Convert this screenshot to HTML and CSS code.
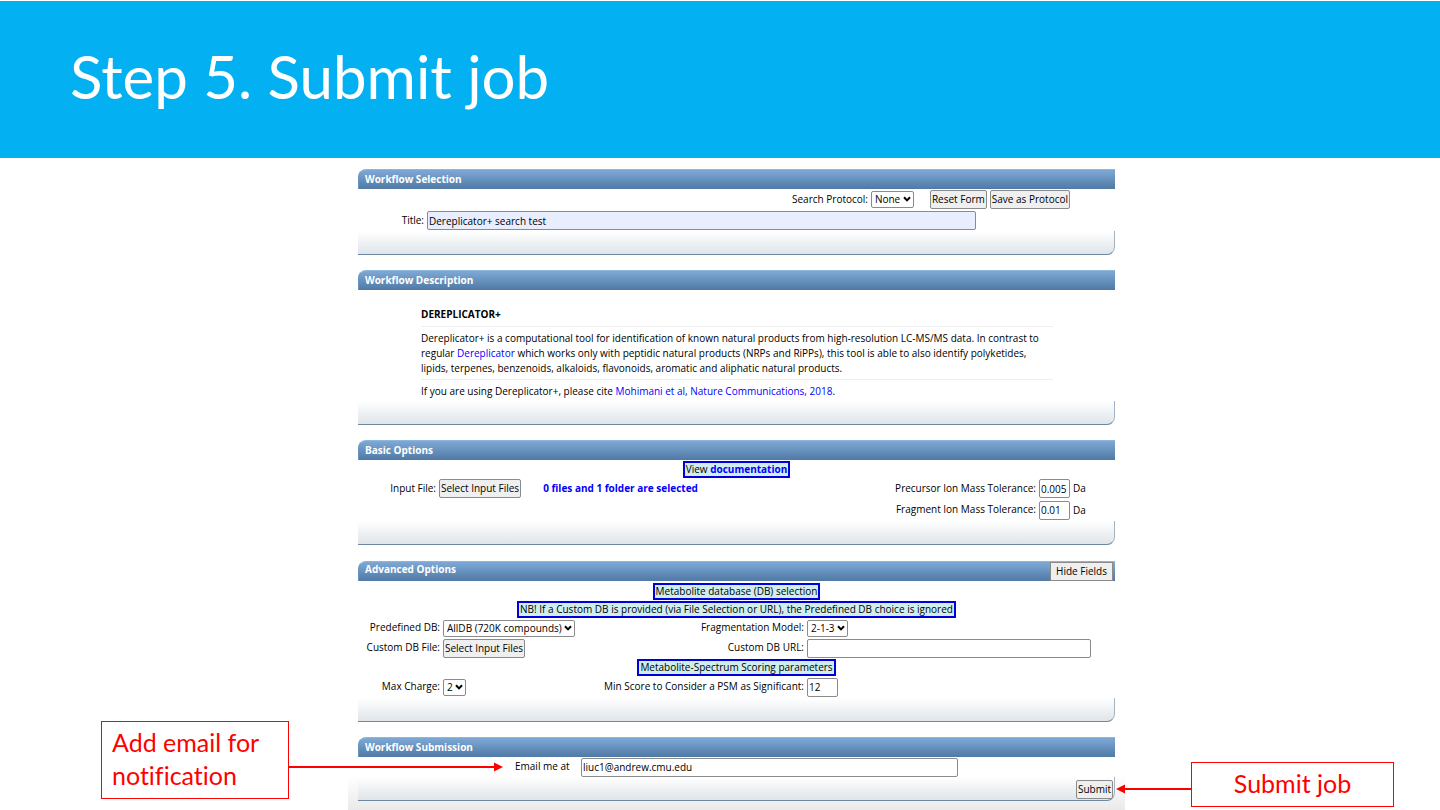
FILE: index.html
```html
<!DOCTYPE html>
<html lang="en">
<head>
<meta charset="utf-8">
<title>Step 5. Submit job</title>
<link rel="stylesheet" href="styles.css">
</head>
<body>
<header class="banner"><h1 class="banner-title">Step 5. Submit job</h1></header>
<main class="stage">
  <aside class="side side-left">
    <div class="callout callout-email">Add email for notification
      <svg class="arrow arrow-right" viewBox="0 0 215 10" aria-hidden="true"><path d="M0 5H207" stroke="#f00" stroke-width="2"/><path d="M206 0.5L215 5L206 9.5Z" fill="#f00"/></svg>
    </div>
  </aside>

  <form class="form" onsubmit="return false">
    <section class="panel">
      <div class="panel-head"><h2 class="panel-title">Workflow Selection</h2></div>
      <div class="row row-protocol">
        <label class="label" for="protocol">Search Protocol:</label>
        <span class="select-box"><select class="select" id="protocol"><option>None</option></select><svg class="chevron" viewBox="0 0 8 6" aria-hidden="true"><path d="M1 1.2L4 4.4L7 1.2"/></svg></span>
        <button class="button button-reset" type="button">Reset Form</button>
        <button class="button" type="button">Save as Protocol</button>
      </div>
      <div class="row row-title">
        <label class="label label-title" for="title">Title:</label>
        <input class="input input-fill input-tinted" id="title" type="text" value="Dereplicator+ search test">
      </div>
      <div class="panel-foot"></div>
    </section>

    <section class="panel">
      <div class="panel-head"><h2 class="panel-title">Workflow Description</h2></div>
      <div class="about">
        <h3 class="about-title">DEREPLICATOR+</h3>
        <p class="about-text">Dereplicator+ is a computational tool for identification of known natural products from high-resolution LC-MS/MS data. In contrast to regular <a class="link" href="#">Dereplicator</a> which works only with peptidic natural products (NRPs and RiPPs), this tool is able to also identify polyketides, lipids, terpenes, benzenoids, alkaloids, flavonoids, aromatic and aliphatic natural products.</p>
        <p class="about-cite">If you are using Dereplicator+, please cite <a class="link" href="#">Mohimani et al, Nature Communications, 2018</a>.</p>
      </div>
      <div class="panel-foot"></div>
    </section>

    <section class="panel">
      <div class="panel-head"><h2 class="panel-title">Basic Options</h2></div>
      <div class="notice-row"><span class="notice">View <a class="link link-strong" href="#">documentation</a></span></div>
      <div class="row basic">
        <span class="label label-file" id="input-file">Input File:</span>
        <button class="button" type="button" aria-describedby="input-file">Select Input Files</button>
        <strong class="status">0 files and 1 folder are selected</strong>
        <label class="label label-push" for="precursor">Precursor Ion Mass Tolerance:</label>
        <input class="input input-short" id="precursor" type="text" value="0.005">
        <span class="unit">Da</span>
      </div>
      <div class="row basic row-last">
        <label class="label label-push" for="fragment">Fragment Ion Mass Tolerance:</label>
        <input class="input input-short" id="fragment" type="text" value="0.01">
        <span class="unit">Da</span>
      </div>
      <div class="panel-foot"></div>
    </section>

    <section class="panel panel-advanced">
      <div class="panel-head head-advanced"><h2 class="panel-title">Advanced Options</h2><button class="button button-hide" type="button">Hide Fields</button></div>
      <div class="notice-row notice-first"><span class="notice">Metabolite database (DB) selection</span></div>
      <div class="notice-row"><span class="notice">NB! If a Custom DB is provided (via File Selection or URL), the Predefined DB choice is ignored</span></div>
      <div class="pairs">
        <label class="label" for="db">Predefined DB:</label>
        <span class="select-box"><select class="select" id="db"><option>AllDB (720K compounds)</option></select><svg class="chevron" viewBox="0 0 8 6" aria-hidden="true"><path d="M1 1.2L4 4.4L7 1.2"/></svg></span>
        <label class="label" for="model">Fragmentation Model:</label>
        <span class="select-box"><select class="select" id="model"><option>2-1-3</option></select><svg class="chevron" viewBox="0 0 8 6" aria-hidden="true"><path d="M1 1.2L4 4.4L7 1.2"/></svg></span>
      </div>
      <div class="pairs">
        <span class="label" id="custom-file">Custom DB File:</span>
        <button class="button" type="button" aria-describedby="custom-file">Select Input Files</button>
        <label class="label" for="url">Custom DB URL:</label>
        <input class="input input-wide" id="url" type="text">
      </div>
      <div class="notice-row"><span class="notice">Metabolite-Spectrum Scoring parameters</span></div>
      <div class="pairs pairs-last">
        <label class="label" for="charge">Max Charge:</label>
        <span class="select-box"><select class="select" id="charge"><option>2</option></select><svg class="chevron" viewBox="0 0 8 6" aria-hidden="true"><path d="M1 1.2L4 4.4L7 1.2"/></svg></span>
        <label class="label" for="score">Min Score to Consider a PSM as Significant:</label>
        <input class="input input-short" id="score" type="text" value="12">
      </div>
      <div class="panel-foot"></div>
    </section>

    <section class="panel">
      <div class="panel-head"><h2 class="panel-title">Workflow Submission</h2></div>
      <div class="row row-email">
        <label class="label label-email" for="email">Email me at</label>
        <input class="input input-fill" id="email" type="email" value="liuc1@andrew.cmu.edu">
      </div>
      <div class="panel-foot foot-submit"><button class="button" type="submit">Submit</button></div>
    </section>
  </form>

  <aside class="side side-right">
    <div class="callout callout-submit">Submit job
      <svg class="arrow arrow-left" viewBox="0 0 76 10" aria-hidden="true"><path d="M8 5H76" stroke="#f00" stroke-width="2"/><path d="M9 0.5L0 5L9 9.5Z" fill="#f00"/></svg>
    </div>
  </aside>
</main>
</body>
</html>
```
FILE: styles.css
```css
* { box-sizing: border-box; }

body {
  margin: 0;
  padding-top: 1px;
  background: #fff;
  color: #000;
  font-family: "Lato", "Liberation Sans", sans-serif;
  font-variant-ligatures: none;
}

.banner {
  display: flex;
  align-items: center;
  height: 157px;
  padding: 0 70px 8px;
  background: #03b0f2;
}

.banner-title {
  margin: 0;
  color: #fff;
  font-size: 60px;
  font-weight: 400;
  line-height: 72px;
}

.stage {
  display: grid;
  grid-template-columns: 348px minmax(0, 1fr) 315px;
}

.side { display: flex; align-items: flex-end; }
.side-left { padding: 0 59px 11px 101px; }
.side-right { padding: 0 46px 3px 66px; }

.callout {
  position: relative;
  flex: 1;
  border: 1px solid #f00;
  background: #fff;
  color: #f00;
  font-size: 25px;
}

.callout-email { padding: 4px 10px 6px; line-height: 33px; }
.callout-submit { padding: 4px 0 6px; line-height: 33px; text-align: center; }

/* Connectors run from a callout over the form */
.arrow { position: absolute; height: 10px; }
.arrow-right { left: 100%; top: 40px; width: 215px; z-index: 1; }
.arrow-left { right: 100%; top: 21px; width: 76px; z-index: 1; }

.form {
  display: flex;
  flex-direction: column;
  gap: 15px;
  padding: 11px 10px 9px;
  background: linear-gradient(to top, #eaeaea, #fff 34px);
  font-family: "Open Sans", sans-serif;
  font-size: 10px;
  font-weight: 500;
  line-height: 15px;
}

.panel {
  border-radius: 8px 0 8px 0;
  background: #fff;
}

.panel-advanced { margin-top: 1px; }

.panel-head {
  display: flex;
  align-items: center;
  height: 20px;
  padding: 0 0 1px 6px;
  border-top: 1px solid #8db6dc;
  border-left: 1px solid #6a94c0;
  border-radius: 8px 0 0 0;
  background: linear-gradient(#7ea9d6, #5079a5);
}

.panel-title {
  margin: 0;
  color: #fff;
  font-size: 10px;
  font-weight: 700;
  line-height: 15px;
}

.head-advanced { align-items: flex-start; justify-content: space-between; padding-right: 2px; }

.panel-foot {
  height: 24px;
  border-right: 1px solid #a3b3c1;
  border-bottom: 1px solid #6f88a0;
  border-radius: 0 0 8px 0;
  background: linear-gradient(#fff, #dfe5ea);
}

.row { display: flex; align-items: center; gap: 3px; min-height: 21px; }
.row-protocol { justify-content: flex-end; padding-right: 45px; }
.row-title { padding-right: 139px; }
.row-last { min-height: 22px; }
.label { padding-bottom: 1px; text-align: right; white-space: nowrap; }
.label-title { width: 66px; }

.input,
.button,
.select {
  margin: 0;
  border: 1px solid #8b8b8b;
  border-radius: 2px;
  color: #000;
  font: inherit;
}

.input { height: 19px; padding: 0 1px; background: #fff; }
.input-fill { flex: 1; min-width: 0; }
.input-tinted { background: #e8eefe; }
.input-short { width: 31px; }
.input-wide { width: 100%; }
.button { height: 19px; padding: 0 1px; background: #efefef; line-height: 15px; white-space: nowrap; }
.button-reset { margin-left: 13px; }
.button-hide { padding: 0 5px; border-radius: 0; }

.select-box { position: relative; display: inline-flex; justify-self: start; }
.select {
  height: 17px;
  padding: 0 12px 0 3px;
  appearance: none;
  background: #fff;
  line-height: 15px;
}
.chevron {
  position: absolute;
  top: 5px;
  right: 3px;
  width: 8px;
  height: 6px;
  fill: none;
  stroke: #000;
  stroke-width: 2;
  pointer-events: none;
}

.about { padding: 17px 62px 2px 63px; }
.about-title { margin: 0; padding-bottom: 4px; border-bottom: 1px solid #eee; font-size: 10px; line-height: 15px; }
.about-text { margin: 0; padding: 4px 0 3px; border-bottom: 1px solid #eee; }
.about-cite { margin: 0; padding-top: 4px; }

.link { color: #00f; text-decoration: none; }
.link-strong { font-weight: 700; }

.notice-row { display: flex; justify-content: center; padding: 1px 0 0; }
.notice { padding: 0 1px; border: 2px solid #00d; background: #d0eeee; line-height: 13px; }
.notice-first { padding-top: 2px; }

.basic { padding-right: 29px; }
.label-file { width: 78px; }
.status { padding-left: 19px; color: #00f; }
.label-push { margin-left: auto; }
.unit { width: 13px; }

.pairs {
  display: grid;
  grid-template-columns: 82px 131px minmax(0, 1fr) 284px;
  gap: 3px;
  align-items: center;
  min-height: 20px;
  padding-right: 24px;
}
.pairs-last { min-height: 22px; }
.pairs .button { justify-self: start; }

.row-email { min-height: 20px; gap: 9px; padding: 0 157px; }
.label-email { width: 57px; text-align: left; }
.foot-submit { display: flex; align-items: flex-start; justify-content: flex-end; padding: 3px 1px 0 0; }
```
